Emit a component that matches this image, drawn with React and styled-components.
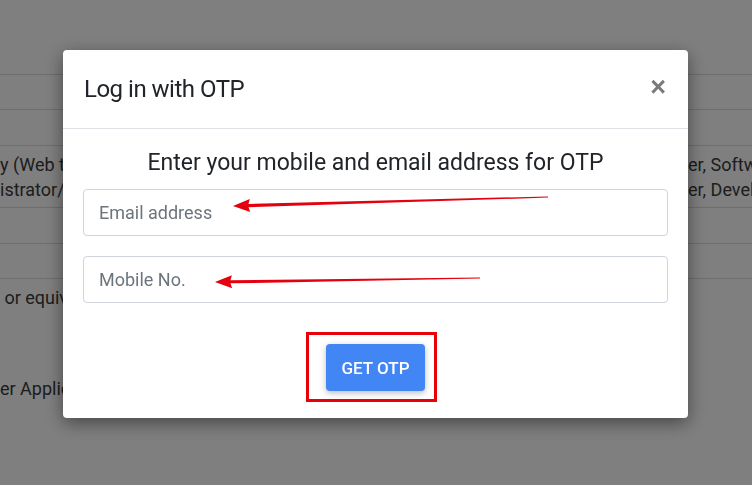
import React from 'react';
import styled, { createGlobalStyle } from 'styled-components';

const GlobalStyle = createGlobalStyle`
  html, body {
    margin: 0;
    padding: 0;
    background: #fff;
    font-family: Roboto, "Noto Sans", Arial, sans-serif;
    overflow: hidden;
  }
`;

const Page = styled.div`
  width: 752px;
  height: 485px;
  padding-top: 74px;
  box-sizing: border-box;
`;

const Row = styled.div`
  display: grid;
  grid-template-columns: 320px 368px 1fr;
  height: ${p => p.h}px;
  border-top: ${p => (p.line ? '1px solid #dcdcdc' : 'none')};
  box-sizing: border-box;
  align-items: ${p => p.align || 'center'};
`;

const Cell = styled.div`
  font-size: 18px;
  line-height: 25px;
  color: #3a3a3a;
  white-space: nowrap;
  overflow: hidden;
  padding-top: ${p => p.pt || 0}px;
`;

const Overlay = styled.div`
  position: fixed;
  inset: 0;
  background: rgba(0, 0, 0, 0.5);
  display: flex;
  justify-content: center;
  align-items: flex-start;
  padding: 50px 1px 0 0;
`;

const Modal = styled.div`
  width: 625px;
  background: #fff;
  border-radius: 4px;
  box-shadow: 0 5px 18px rgba(0, 0, 0, 0.45);
`;

const Header = styled.div`
  height: 79px;
  box-sizing: border-box;
  padding: 0 21px;
  display: flex;
  align-items: center;
  justify-content: space-between;
  border-bottom: 1px solid #dee2e6;
`;

const Title = styled.h5`
  margin: 0;
  font-size: 24px;
  font-weight: 400;
  color: #212529;
  letter-spacing: -0.5px;
`;

const Close = styled.button`
  border: 0;
  background: none;
  padding: 0;
  margin-top: -3px;
  margin-right: 1px;
  font-size: 27px;
  font-weight: 700;
  line-height: 1;
  color: #7a7a7a;
  cursor: pointer;
  font-family: Arial, sans-serif;
`;

const Body = styled.div`
  position: relative;
  padding: 19px 20px 27px;
  display: flex;
  flex-direction: column;
`;

const Heading = styled.h4`
  margin: 0 0 12px;
  text-align: center;
  font-size: 23px;
  line-height: 29px;
  font-weight: 400;
  color: #212529;
`;

const Input = styled.input`
  height: 47px;
  box-sizing: border-box;
  border: 1px solid #ced4da;
  border-radius: 4px;
  padding: 0 15px;
  font-size: 18px;
  font-family: inherit;
  color: #495057;
  margin-bottom: ${p => p.mb}px;
  &::placeholder {
    color: #6c757d;
  }
`;

const ButtonRow = styled.div`
  display: flex;
  justify-content: center;
`;

const Marked = styled.div`
  position: relative;
`;

const RedBox = styled.div`
  position: absolute;
  top: -12px;
  bottom: -11px;
  left: -20px;
  right: -12px;
  border: 3px solid #e8000b;
  pointer-events: none;
`;

const Button = styled.button`
  width: 99px;
  height: 47px;
  border: 0;
  border-radius: 4px;
  background: #4285f4;
  color: #fff;
  font-family: inherit;
  font-size: 17px;
  font-weight: 500;
  box-shadow: 0 2px 5px rgba(0, 0, 0, 0.16), 0 2px 10px rgba(0, 0, 0, 0.12);
`;

const Arrows = styled.svg`
  position: absolute;
  left: 0;
  top: 0;
  pointer-events: none;
`;

// arrow tail/tip in body coordinates (body origin = 63,129)
const arrows = [
  { tail: [485, 68], tip: [170, 77] },
  { tail: [417, 149], tip: [152, 153] },
];

function Arrow({ tail, tip }) {
  const [tx, ty] = tail;
  const [hx, hy] = tip;
  const dx = tx - hx;
  const dy = ty - hy;
  const len = Math.hypot(dx, dy);
  const ux = dx / len;
  const uy = dy / len;
  const nx = -uy;
  const ny = ux;
  const head = 15;
  const bx = hx + ux * head;
  const by = hy + uy * head;
  const shaft = [
    [bx + nx * 1.6, by + ny * 1.6],
    [tx + nx * 0.6, ty + ny * 0.6],
    [tx - nx * 0.6, ty - ny * 0.6],
    [bx - nx * 1.6, by - ny * 1.6],
  ];
  const tri = [
    [hx, hy],
    [hx + ux * (head + 2) + nx * 6.5, hy + uy * (head + 2) + ny * 6.5],
    [bx, by],
    [hx + ux * (head + 2) - nx * 6.5, hy + uy * (head + 2) - ny * 6.5],
  ];
  const pts = a => a.map(p => p.join(',')).join(' ');
  return (
    <g fill="#e3000f">
      <polygon points={pts(shaft)} />
      <polygon points={pts(tri)} />
    </g>
  );
}

export default function App() {
  return (
    <>
      <GlobalStyle />
      <Page>
        <Row h={35} line />
        <Row h={36} line />
        <Row h={62} line>
          <Cell>y (Web tech)<br />istrator/ Net</Cell>
          <Cell />
          <Cell>er, Softwa<br />er, Devel</Cell>
        </Row>
        <Row h={36} line />
        <Row h={35} line />
        <Row h={98} line align="start">
          <Cell pt={6}>&nbsp;or equiv</Cell>
        </Row>
        <Row h={40} align="start">
          <Cell>er Application</Cell>
        </Row>
      </Page>
      <Overlay>
        <Modal>
          <Header>
            <Title>Log in with OTP</Title>
            <Close aria-label="Close">×</Close>
          </Header>
          <Body>
            <Heading>Enter your mobile and email address for OTP</Heading>
            <Input type="email" placeholder="Email address" mb={20} />
            <Input type="tel" placeholder="Mobile No." mb={41} />
            <ButtonRow>
              <Marked>
                <RedBox />
                <Button>GET OTP</Button>
              </Marked>
            </ButtonRow>
            <Arrows width="625" height="200">
              {arrows.map((a, i) => (
                <Arrow key={i} {...a} />
              ))}
            </Arrows>
          </Body>
        </Modal>
      </Overlay>
    </>
  );
}
